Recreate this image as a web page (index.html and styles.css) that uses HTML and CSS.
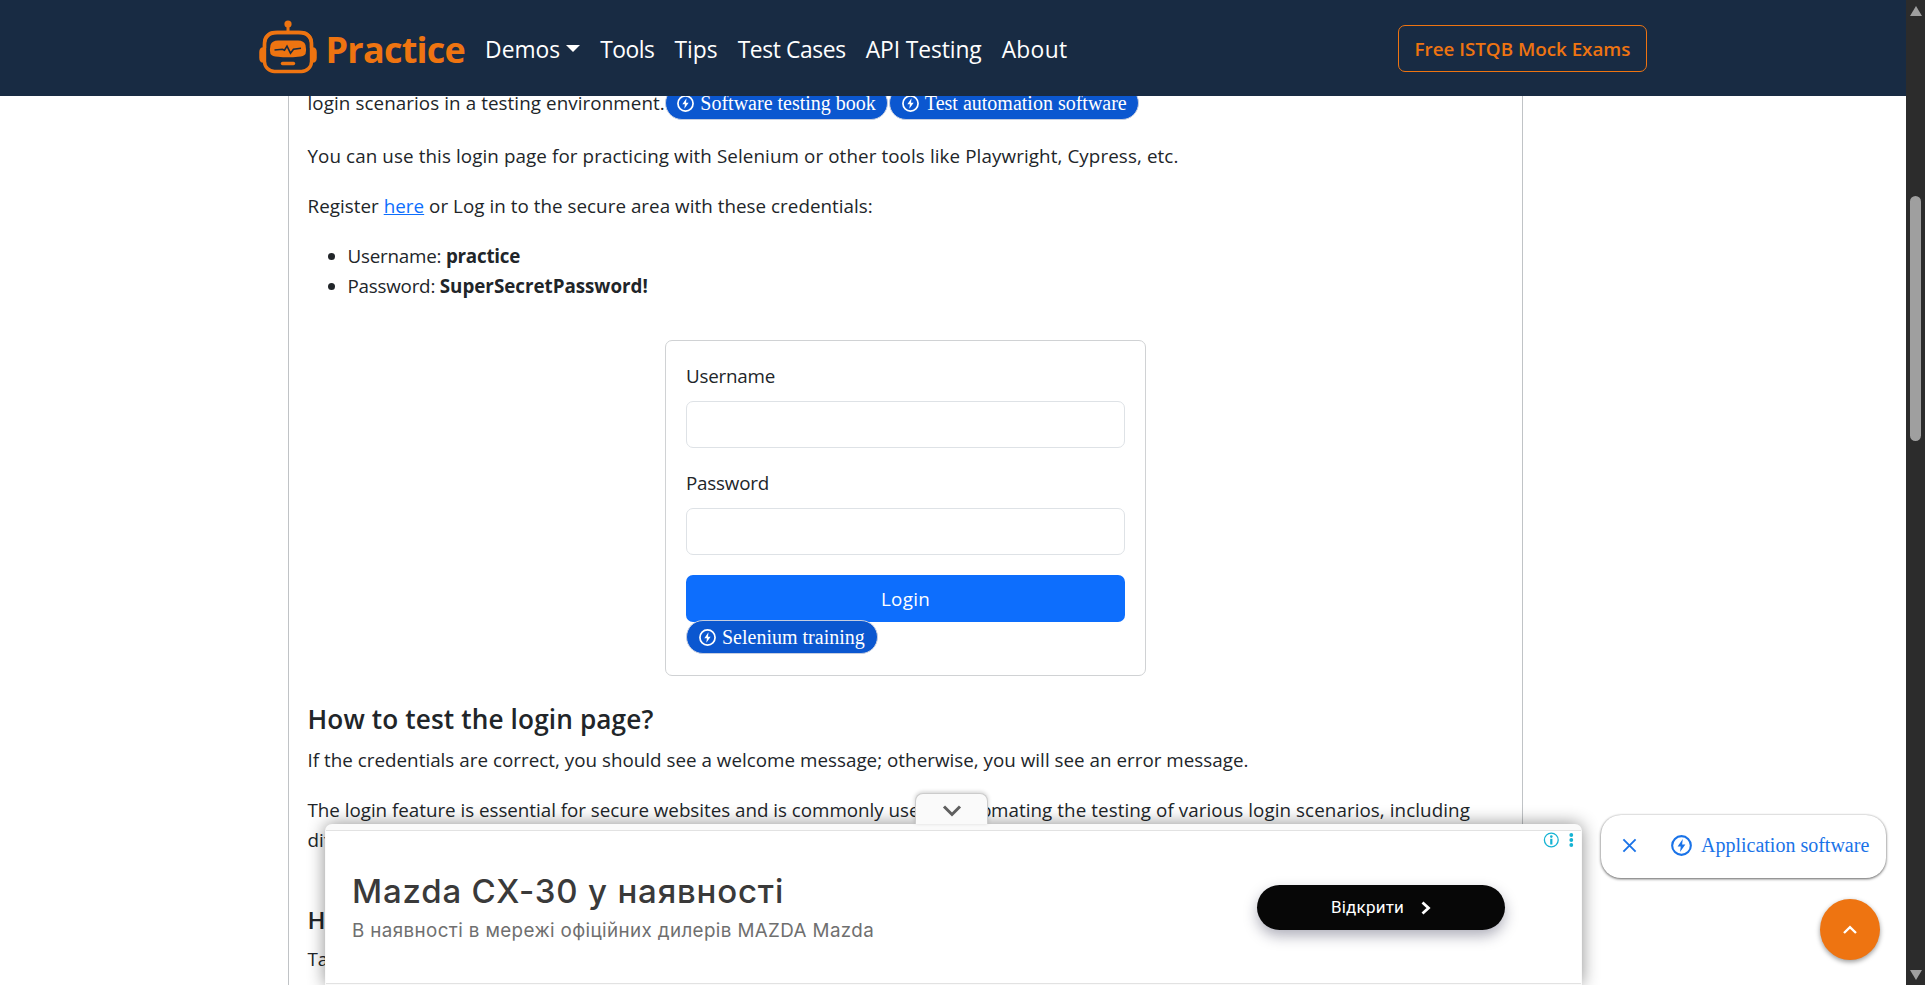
FILE: index.html
```html
<!DOCTYPE html>
<html lang="en">
<head>
<meta charset="utf-8">
<title>Test Login Page</title>
<link rel="stylesheet" href="styles.css">
</head>
<body>
<svg width="0" height="0" class="defs">
  <symbol id="bolt" viewBox="0 0 20 20"><circle cx="10" cy="10" r="8.9" fill="none" stroke="currentColor" stroke-width="2"/><path d="M11.2 3.8 6.3 11h3l-.7 5.3L13.7 9h-3.1z" fill="currentColor"/></symbol>
</svg>
<div class="viewport">
  <div class="page">
    <header class="navbar">
      <a class="brand">
        <svg class="robot" viewBox="0 0 58 54" fill="none" stroke="#ee7411">
          <circle cx="29" cy="4" r="3.6" fill="#ee7411" stroke="none"/>
          <path d="M29 5v8" stroke-width="3"/>
          <rect x="5.500" y="12.500" width="47" height="39" rx="10" stroke-width="3.400"/>
          <path d="M5.500 28v-3q0-12.500 13-12.500h21q13 0 13 12.500v3" stroke-width="3.400"/>
          <path d="M4.500 28v14q-3.500 0-3.500-4v-6q0-4 3.500-4zM53.500 28v14q3.500 0 3.500-4v-6q0-4-3.500-4z" fill="#ee7411" stroke-width="1.500"/>
          <path d="M11.500 25Q13 20.500 19 20.500h20q6 0 7.500 4.500 1.200 5 0 9Q45 36.500 39 36.800q-10 1-20 0-6-.3-7.500-2.800-1.200-4 0-9z" fill="#ee7411" stroke="none"/>
          <path d="M15.500 30l8-.8 2 1 2.500-4 3.500 7 3-4 7.500-1" stroke="#182b43" stroke-width="1.600"/>
          <path d="M23.500 43.500h11" stroke-width="3.400" stroke-linecap="round"/>
        </svg>
        <span class="brand-name">Practice</span>
      </a>
      <nav class="links">
        <a class="demos"><span>Demos</span><i class="caret"></i></a>
        <a class="tools">Tools</a>
        <a>Tips</a>
        <a class="cases">Test Cases</a>
        <a class="api">API Testing</a>
        <a class="about">About</a>
      </nav>
      <a class="exams">Free ISTQB Mock Exams</a>
    </header>
    <main class="content">
      <div class="intro"><span class="intro-text">login scenarios in a testing environment.</span><a class="pill"><svg><use href="#bolt"/></svg>Software testing book</a><a class="pill"><svg><use href="#bolt"/></svg>Test automation software</a></div>
      <p class="usage">You can use this login page for practicing with Selenium or other tools like Playwright, Cypress, etc.</p>
      <p class="register">Register <a class="link">here</a> or Log in to the secure area with these credentials:</p>
      <ul class="creds">
        <li>Username: <b>practice</b></li>
        <li>Password: <b class="secret">SuperSecretPassword!</b></li>
      </ul>
      <form class="login">
        <label>Username</label>
        <div class="field"></div>
        <label>Password</label>
        <div class="field"></div>
        <div class="submit">Login</div>
        <a class="pill"><svg><use href="#bolt"/></svg>Selenium training</a>
      </form>
      <h2>How to test the login page?</h2>
      <p class="outcome">If the credentials are correct, you should see a welcome message; otherwise, you will see an error message.</p>
      <p class="feature">The login feature is essential for secure websites and is commonly used<span class="tight"> in auto</span><span class="wide">mating the testing of various login scenarios, including</span><br>different roles.</p>
      <h3>How to automate</h3>
      <p>Take the test cases</p>
    </main>
  </div>
  <div class="scrollbar"><i class="up"></i><i class="thumb"></i><i class="down"></i></div>
</div>

<aside class="ad">
  <div class="ad-tab"><svg width="20" height="14" viewBox="0 0 20 14"><path d="M2 2.500l8 8 8-8" fill="none" stroke="#5f5f5f" stroke-width="3"/></svg></div>
  <div class="ad-body">
    <div class="ad-copy">
      <div class="ad-title">Mazda CX-30 у наявності</div>
      <div class="ad-sub">В наявності в мережі офіційних дилерів MAZDA Mazda</div>
    </div>
    <div class="ad-open"><span>Відкрити</span><svg width="10" height="14" viewBox="0 0 10 14"><path d="M1.500 1.500l6 5.500-6 5.500" fill="none" stroke="#fff" stroke-width="2.800"/></svg></div>
    <svg class="ad-info" width="34" height="18" viewBox="0 0 34 18"><g fill="#15b3d3"><circle cx="8.300" cy="9" r="6.900" fill="none" stroke="#15b3d3" stroke-width="1.300"/><rect x="7.200" y="7.800" width="2.200" height="5.700"/><circle cx="8.300" cy="5.600" r="1.300"/><circle cx="28.300" cy="4" r="1.900"/><circle cx="28.300" cy="9" r="1.900"/><circle cx="28.300" cy="14" r="1.900"/></g></svg>
  </div>
</aside>

<aside class="suggest">
  <svg class="close" viewBox="0 0 16 16"><path d="M1.500 1.500l13 13M14.500 1.500l-13 13" stroke="#1a73e8" stroke-width="2"/></svg>
  <svg class="suggest-bolt"><use href="#bolt"/></svg>
  <span>Application software</span>
</aside>
<div class="to-top"><svg width="16" height="10" viewBox="0 0 16 10"><path d="M2 8l6-5.800L14 8" fill="none" stroke="#fff" stroke-width="2.400"/></svg></div>
</body>
</html>
```
FILE: styles.css
```css
* { box-sizing: border-box; }
html { height: 985px; overflow: hidden; }
body { margin: 0; height: 985px; overflow: hidden; background: #fff; color: #212529; font: 18.8px/30px "Open Sans", "Noto Sans", sans-serif; }
.defs { position: absolute; }
.viewport { display: flex; height: 985px; }
.page { flex: 1; display: flex; flex-direction: column; min-width: 0; }
.navbar { flex: none; height: 96px; background: #182b43; display: flex; align-items: center; padding: 0 259px 0 259px; }
.brand { display: flex; align-items: center; color: #ee7411; }
.robot { width: 58px; height: 54px; margin-top: -3px; }
.brand-name { font-size: 36px; font-weight: 700; margin-left: 8.500px; letter-spacing: -.75px; padding-top: 3px; }
.links { display: flex; color: #fff; font-size: 22.8px; gap: 20px; margin-left: 20px; padding-top: 3px; }
.demos { display: flex; align-items: center; gap: 6px; }
.tools { letter-spacing: -.45px; }
.cases { letter-spacing: -.38px; }
.api { letter-spacing: -.08px; }
.about { letter-spacing: .3px; }
.caret { border: 7px solid transparent; border-top-color: #fff; border-bottom: 0; margin-top: -3px; }
.exams { margin-left: auto; width: 249px; height: 47px; border: 1px solid #ee7411; border-radius: 7px; color: #ee7411; font-weight: 600; text-align: center; line-height: 46px; }
.content { flex: 1; min-height: 0; overflow: hidden; width: 1235px; margin-left: 288px; border: solid #c0c3c6; border-width: 0 1px; padding: 0 18px 0 18.500px; }
.intro { display: flex; height: 33px; margin: -8px 0 20px; white-space: nowrap; }
.intro-text { letter-spacing: .086px; }
.pill { display: inline-flex; align-items: center; height: 34px; padding: 0 12px; border: 1px solid #c5cde0; border-radius: 17px; background: #0b57d0; color: #fff; font: 20px/32px "Liberation Serif", serif; margin-right: 1px; }
.pill svg { width: 17px; height: 17px; margin-right: 6px; }
.intro .pill { margin-top: -2px; flex: none; padding: 0 11.500px; }
p { margin: 0 0 20px; white-space: nowrap; }
.usage { letter-spacing: .102px; }
.register { letter-spacing: .042px; }
.outcome { letter-spacing: .024px; }
.link { color: #0d6efd; text-decoration: underline; }
.creds { margin: 0; padding-left: 40px; letter-spacing: -.22px; }
.secret { letter-spacing: -.02px; }
.login { width: 481px; height: 336px; margin: 39px 0 0 357.500px; border: 1px solid #d0d2d4; border-radius: 7px; padding: 20px; display: flex; flex-direction: column; align-items: flex-start; }
.login label { height: 30px; margin-bottom: 10px; letter-spacing: -.21px; }
.field { width: 439px; height: 47px; border: 1px solid #dee2e6; border-radius: 7px; margin-bottom: 20px; flex: none; }
.submit { width: 439px; height: 47px; flex: none; border-radius: 7px; background: #0d6efd; color: #fff; text-align: center; line-height: 48px; margin-bottom: -2px; letter-spacing: .28px; }
.login .pill { flex: none; }
h2 { margin: 26px 0 9px; font-size: 26.200px; font-weight: 600; line-height: 34px; letter-spacing: .12px; }
.feature { margin-bottom: 50px; letter-spacing: -.019px; }
.tight { letter-spacing: -.75px; }
.wide { letter-spacing: .075px; }
h3 { margin: 0 0 9px; font-size: 24px; font-weight: 600; line-height: 30px; }
.scrollbar { width: 19px; background: #2c2c2c; display: flex; flex-direction: column; align-items: center; padding: 6px 0 5px; }
.up { border: 6px solid transparent; border-bottom: 10px solid #9f9f9f; border-top: 0; }
.thumb { width: 11px; height: 245px; border-radius: 6px; background: #9f9f9f; margin-top: 180px; }
.down { margin-top: auto; border: 6px solid transparent; border-top: 10px solid #9f9f9f; border-bottom: 0; }
.ad { position: absolute; left: 325px; top: 824px; width: 1257px; height: 161px; border-radius: 7px 7px 0 0; background: #fafafa; box-shadow: 0 0 17px rgba(0,0,0,.45); padding: 6px 1px 1px; border-bottom: 0; }
.ad-body { height: 154px; background: #fff; border: 1px solid #e2e2e2; border-width: 1px 0; display: flex; justify-content: space-between; padding: 0 76px 0 26px; }
.ad-tab { position: absolute; left: 590px; top: -31px; width: 73px; height: 31px; background: #fafafa; border: 1px solid #ccc; border-bottom: 0; border-radius: 8px 8px 0 0; box-shadow: 0 -1px 4px rgba(0,0,0,.2); text-align: center; line-height: 34px; }
.ad-title { font: 500 33px/44px Inter, sans-serif; color: #3a3a3a; margin-top: 38px; white-space: nowrap; letter-spacing: .81px; }
.ad-sub { font: 18.800px/30px Inter, sans-serif; color: #6f6f6f; white-space: nowrap; margin-top: 3px; letter-spacing: .38px; }
.ad-open { width: 248px; height: 45px; margin-top: 54px; border-radius: 23px; background: #070707; color: #fff; font: 17px/45px Roboto, sans-serif; letter-spacing: .2px; display: flex; align-items: center; justify-content: center; gap: 17px; box-shadow: 0 6px 14px rgba(30,30,60,.35); }
.ad-info { position: absolute; right: 5px; top: 7px; }
.suggest { position: absolute; left: 1601px; top: 815px; width: 285px; height: 63px; border-radius: 20px; background: #fff; box-shadow: 0 1px 3px rgba(0,0,0,.6), 0 0 2px rgba(0,0,0,.15); display: flex; align-items: center; color: #1a73e8; font: 20px/30px "Liberation Serif", serif; padding: 0 0 2px 21px; white-space: nowrap; }
.suggest span { margin-top: -1px; }
.close { width: 15px; height: 15px; }
.suggest-bolt { width: 21px; height: 21px; margin: 0 9px 0 34px; }
.to-top { position: absolute; left: 1820px; top: 899px; width: 60px; height: 61px; border-radius: 50%; background: #ee7411; display: flex; align-items: center; justify-content: center; box-shadow: 0 2px 5px rgba(0,0,0,.4); }
```
